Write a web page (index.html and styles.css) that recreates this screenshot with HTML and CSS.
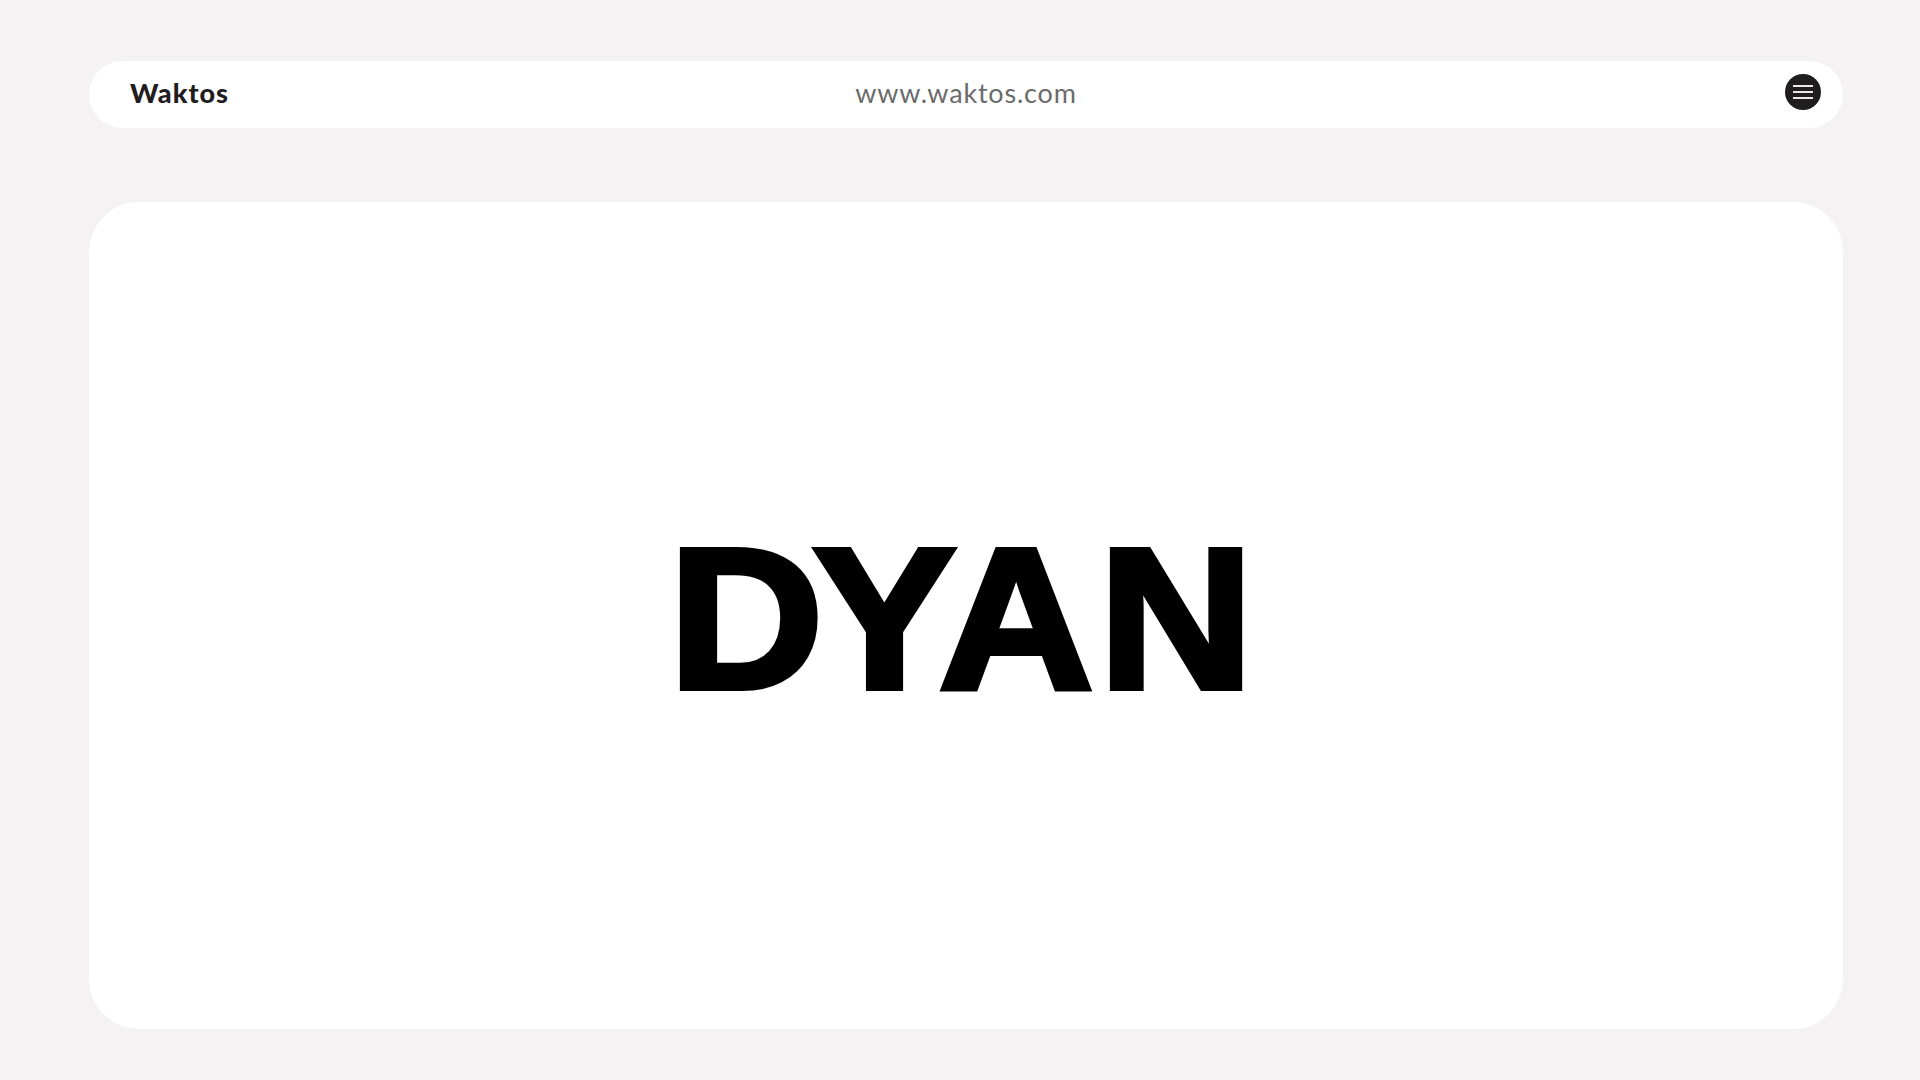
FILE: index.html
```html
<!DOCTYPE html>
<html lang="en">
<head>
<meta charset="utf-8">
<title>Waktos</title>
<link rel="stylesheet" href="styles.css">
</head>
<body>
<div class="page">
  <header class="topbar">
    <div class="brand">Waktos</div>
    <div class="url">www.waktos.com</div>
    <button class="menu" aria-label="Menu">
      <span class="line"></span>
      <span class="line"></span>
      <span class="line"></span>
    </button>
  </header>
  <main class="card">
    <h1 class="title"><span class="ch ch-d">D</span><span class="ch ch-y">Y</span><span class="ch ch-a">A</span><span class="ch ch-n">N</span></h1>
  </main>
</div>
</body>
</html>
```

FILE: styles.css
```css
* { box-sizing: border-box; }
html, body {
  margin: 0;
  padding: 0;
  background: #f4f2f3;
  height: 100%;
}
.page {
  width: 1754px;
  margin-left: 89px;
  padding-top: 61px;
  display: flex;
  flex-direction: column;
  gap: 74px;
}
.topbar {
  height: 67px;
  background: #ffffff;
  border-radius: 34px;
  display: grid;
  grid-template-columns: 1fr auto 1fr;
  align-items: center;
  padding: 0 22px 5px 22px;
}
.brand {
  padding-left: 19px;
  font-family: "Lato", "Open Sans", sans-serif;
  font-weight: 900;
  font-size: 27px;
  color: #1f1d1e;
  letter-spacing: 1px;
}
.url {
  font-family: "Lato", "Open Sans", sans-serif;
  font-weight: 400;
  font-size: 27px;
  color: #6b6b6b;
  letter-spacing: 0.8px;
}
.menu {
  justify-self: end;
  width: 36px;
  height: 36px;
  border-radius: 50%;
  background: #1f1d1e;
  border: none;
  padding: 0;
  display: flex;
  flex-direction: column;
  align-items: center;
  justify-content: center;
  gap: 4.5px;
}
.line {
  display: block;
  width: 20px;
  height: 1.6px;
  background: #e8e8e8;
}
.card {
  height: 827px;
  background: #ffffff;
  border-radius: 50px;
  display: flex;
  align-items: center;
  justify-content: center;
  padding-top: 5px;
}
.title {
  margin: 0;
  font-family: "Liberation Sans", Arial, sans-serif;
  font-weight: 700;
  font-size: 201px;
  line-height: 1;
  color: #000;
  font-kerning: none;
  -webkit-text-stroke: 6px #000;
  transform: scaleX(1.065);
}
.ch { display: inline-block; }
.ch-d { margin-right: -9.7px; }
.ch-y { margin-right: -16.1px; }
.ch-a { margin-right: 5.1px; }
.ch-n { margin-right: 10px; }
```
